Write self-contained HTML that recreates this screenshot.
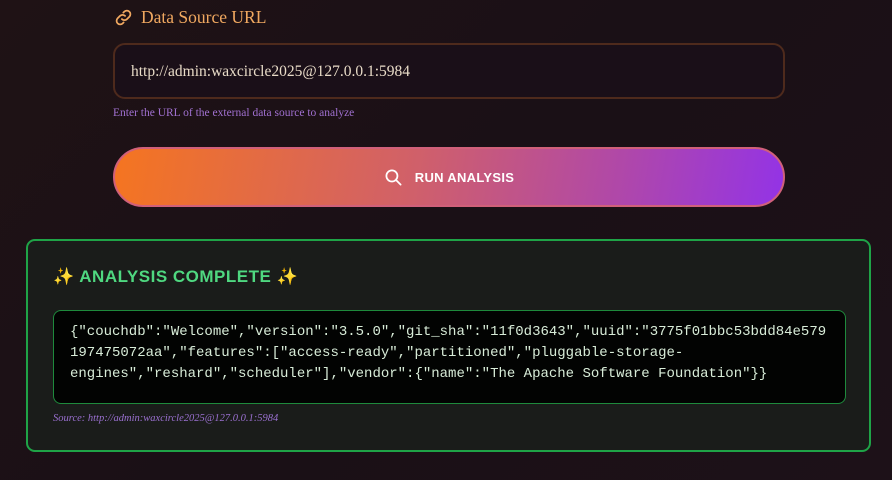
<!DOCTYPE html>
<html><head><meta charset="utf-8"><style>
*{box-sizing:border-box;margin:0;padding:0}
html,body{width:892px;height:480px;overflow:hidden}
body{background:linear-gradient(135deg,#1f1215 0%,#1a1016 50%,#1d1118 100%);font-family:"Liberation Serif",serif;position:relative}
.lbl{position:absolute;left:114px;top:7px;color:#f0a860;font-size:17.5px;display:flex;align-items:center;gap:8px}
.inp{position:absolute;left:113px;top:43px;width:672px;height:56px;border:2px solid #4e2a1c;border-radius:12px;background:#1a0f18;color:#e9dcc8;font-size:15.5px;padding:18px 0 0 16px}
.hint{position:absolute;left:113px;top:107px;color:#a070d0;font-size:11.5px}
.btn{position:absolute;left:113px;top:147px;width:672px;height:60px;border-radius:30px;background:linear-gradient(100deg,#f57520 0%,#d0606a 45%,#b048a8 75%,#9333e6 100%);border:2px solid #d0607a;display:flex;align-items:center;justify-content:center;gap:12px;color:#fff;font:bold 13px "Liberation Sans",sans-serif;letter-spacing:0.3px}
.card{position:absolute;left:26px;top:239px;width:845px;height:213px;border:2px solid #1fa347;border-radius:9px;background:#1a1c1a}
.h{position:absolute;left:25px;top:26px;color:#4fd880;font:bold 17px "Liberation Sans",sans-serif;letter-spacing:0.5px}
.code{position:absolute;left:25px;top:69px;width:793px;height:94px;background:#020302;border:1px solid #1e8a3c;border-radius:8px;color:#d8ecd8;font:14px/21px "Liberation Mono",monospace;padding:11px 0 0 16px;white-space:pre}
.src{position:absolute;left:25px;top:172px;color:#9a70d0;font-size:10.5px;font-style:italic}
</style></head><body>
<div class="lbl"><svg width="19" height="19" viewBox="0 0 24 24" fill="none" stroke="#f0a860" stroke-width="2.2" stroke-linecap="round"><path d="M10 14a4.5 4.5 0 0 0 6.4 0l3-3a4.5 4.5 0 0 0-6.4-6.4l-1.2 1.2"/><path d="M14 10a4.5 4.5 0 0 0-6.4 0l-3 3a4.5 4.5 0 0 0 6.4 6.4l1.2-1.2"/></svg>Data Source URL</div>
<div class="inp">http://admin:waxcircle2025@127.0.0.1:5984</div>
<div class="hint">Enter the URL of the external data source to analyze</div>
<div class="btn"><svg width="19" height="19" viewBox="0 0 24 24" fill="none" stroke="#fff" stroke-width="2.2" stroke-linecap="round"><circle cx="10" cy="10" r="7"/><path d="M15.5 15.5L21 21"/></svg>RUN ANALYSIS</div>
<div class="card">
<div class="h">✨ ANALYSIS COMPLETE ✨</div>
<div class="code">{"couchdb":"Welcome","version":"3.5.0","git_sha":"11f0d3643","uuid":"3775f01bbc53bdd84e579
197475072aa","features":["access-ready","partitioned","pluggable-storage-
engines","reshard","scheduler"],"vendor":{"name":"The Apache Software Foundation"}}</div>
<div class="src">Source: http://admin:waxcircle2025@127.0.0.1:5984</div>
</div>
</body></html>
